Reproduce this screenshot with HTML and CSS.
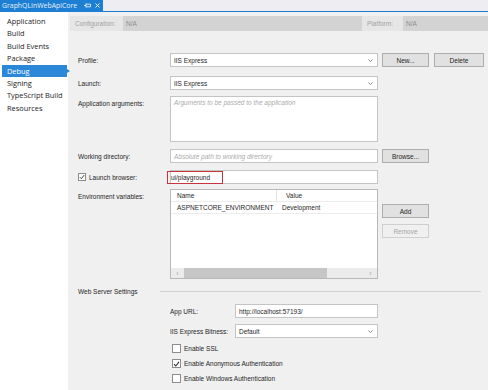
FILE: index.html
```html
<!DOCTYPE html>
<html lang="en">
<head>
    <meta charset="UTF-8">
    <meta name="viewport" content="width=device-width, initial-scale=1.0">
    <title>GraphQLInWebApiCore - Debug</title>
    <link rel="stylesheet" href="styles.css">
</head>
<body>
    <!-- Document tab -->
    <div class="tabstrip">
        <div class="doc-tab">
            <span class="doc-title">GraphQLInWebApiCore</span>
            <svg class="pin" width="7" height="5" viewBox="0 0 7 5"><path d="M0 2.5h2M2 0.5v4M2 1.2h4.5v2.6H2" fill="none" stroke="#e6f0fa" stroke-width="0.9"/></svg>
            <svg class="close" width="5" height="5" viewBox="0 0 5 5"><path d="M0.5 0.5l4 4M4.5 0.5l-4 4" stroke="#e6f0fa" stroke-width="1"/></svg>
        </div>
    </div>

    <div class="workspace">
        <!-- Property pages -->
        <ul class="nav">
            <li>Application</li>
            <li>Build</li>
            <li>Build Events</li>
            <li>Package</li>
            <li class="selected">Debug</li>
            <li>Signing</li>
            <li>TypeScript Build</li>
            <li>Resources</li>
        </ul>

        <div class="page">
            <div class="config-bar">
                <span class="config-label config-wide">Configuration:</span>
                <span class="config-box config-main">N/A</span>
                <span class="config-label">Platform:</span>
                <span class="config-box config-fill">N/A</span>
            </div>

            <div class="form">
                <div class="row row-profile">
                    <span class="row-label">Profile:</span>
                    <div class="field select">IIS Express<svg class="chevron" width="5" height="3" viewBox="0 0 5 3"><path d="M0.5 0.5l2 2 2-2" fill="none" stroke="#7a7a7a" stroke-width="0.9"/></svg></div>
                    <div class="actions">
                        <span class="btn">New...</span>
                        <span class="btn btn-wide">Delete</span>
                    </div>
                </div>

                <div class="row row-launch">
                    <span class="row-label">Launch:</span>
                    <div class="field select">IIS Express<svg class="chevron" width="5" height="3" viewBox="0 0 5 3"><path d="M0.5 0.5l2 2 2-2" fill="none" stroke="#7a7a7a" stroke-width="0.9"/></svg></div>
                </div>

                <div class="row row-args">
                    <span class="row-label label-top">Application arguments:</span>
                    <div class="field textarea"><span class="placeholder">Arguments to be passed to the application</span></div>
                </div>

                <div class="row row-workdir">
                    <span class="row-label">Working directory:</span>
                    <div class="field"><span class="placeholder">Absolute path to working directory</span></div>
                    <div class="actions">
                        <span class="btn">Browse...</span>
                    </div>
                </div>

                <div class="row row-browser">
                    <span class="row-label check-label">
                        <span class="check small checked"><svg width="7" height="6" viewBox="0 0 7 6"><path d="M1 3.2l1.8 1.8L6 0.8" fill="none" stroke="#333" stroke-width="1.1"/></svg></span>
                        Launch browser:
                    </span>
                    <div class="field"><span class="highlight">ui/playground</span></div>
                </div>

                <div class="row row-env">
                    <span class="row-label label-top">Environment variables:</span>
                    <div class="grid-table">
                        <div class="grid-head">
                            <span class="cell cell-name">Name</span>
                            <span class="cell cell-value head-value">Value</span>
                        </div>
                        <div class="grid-row">
                            <span class="cell cell-name">ASPNETCORE_ENVIRONMENT</span>
                            <span class="cell cell-value">Development</span>
                        </div>
                        <div class="grid-space"></div>
                        <div class="hscroll">
                            <span class="arrow">&lsaquo;</span>
                            <span class="thumb"></span>
                            <span class="track"></span>
                            <span class="arrow">&rsaquo;</span>
                        </div>
                    </div>
                    <div class="actions actions-stack">
                        <span class="btn">Add</span>
                        <span class="btn disabled">Remove</span>
                    </div>
                </div>

                <div class="row row-section">
                    <span class="section-label">Web Server Settings</span>
                    <span class="section-line"></span>
                </div>

                <div class="row sub-row row-url">
                    <span class="sub-label">App URL:</span>
                    <div class="field narrow">http://localhost:57193/</div>
                </div>

                <div class="row sub-row row-bitness">
                    <span class="sub-label">IIS Express Bitness:</span>
                    <div class="field narrow select">Default<svg class="chevron" width="5" height="3" viewBox="0 0 5 3"><path d="M0.5 0.5l2 2 2-2" fill="none" stroke="#7a7a7a" stroke-width="0.9"/></svg></div>
                </div>

                <div class="row check-row row-ssl">
                    <span class="check"></span>Enable SSL
                </div>
                <div class="row check-row">
                    <span class="check checked"><svg width="7" height="6" viewBox="0 0 7 6"><path d="M1 3.2l1.8 1.8L6 0.8" fill="none" stroke="#333" stroke-width="1.1"/></svg></span>Enable Anonymous Authentication
                </div>
                <div class="row check-row">
                    <span class="check"></span>Enable Windows Authentication
                </div>
            </div>
        </div>
    </div>
</body>
</html>
```

FILE: styles.css
```css
body {
    margin: 0;
    width: 488px;
    height: 390px;
    overflow: hidden;
    background: #f0f0f0;
    color: #1f1f1f;
    font-family: "Liberation Sans", Arial, sans-serif;
    font-size: 6.5px;
}

/* tab strip */
.tabstrip {
    height: 11px;
    background: #eeeef2;
    border-bottom: 1px solid #1c7fd3;
    display: flex;
}
.doc-tab {
    width: 101px;
    padding-left: 2px;
    background: #1c7fd3;
    color: #e6f0fa;
    display: flex;
    align-items: center;
    font-family: "Open Sans", sans-serif;
    font-size: 6.9px;
}
.pin {
    margin-left: 7px;
}
.close {
    margin-left: 4px;
}

.workspace {
    display: flex;
    height: 378px;
}

/* left navigation */
.nav {
    width: 68px;
    flex-shrink: 0;
    margin: 0;
    padding: 3px 0 0;
    list-style: none;
    background: #fff;
    font-family: "Open Sans", sans-serif;
    font-size: 7.4px;
    color: #1e1e1e;
}
.nav li {
    margin: 0 1px 0 2px;
    padding-left: 5px;
    line-height: 12.4px;
    height: 12.4px;
    position: relative;
}
.nav li.selected {
    background: #2b88d8;
    color: #fff;
}
.nav li.selected::after {
    content: "";
    position: absolute;
    right: -3px;
    top: 4px;
    border-left: 3px solid #2b88d8;
    border-top: 2.5px solid transparent;
    border-bottom: 2.5px solid transparent;
}

.page {
    flex: 1;
}

/* configuration bar */
.config-bar {
    display: flex;
    height: 15px;
    margin: 4px 0 0 2px;
    line-height: 15px;
}
.config-label {
    background: #e6e6e6;
    color: #a2a2a2;
    width: 36px;
    padding-left: 5px;
}
.config-wide {
    width: 48px;
}
.config-box {
    background: #d3d3d3;
    color: #8c8c8c;
    padding-left: 3px;
}
.config-main {
    width: 236px;
}
.config-fill {
    flex: 1;
}

/* form */
.form {
    padding-left: 10px;
    margin-top: 22px;
}
.row {
    display: flex;
    align-items: center;
}
.row-launch { margin-top: 9px; }
.row-args { margin-top: 6px; align-items: flex-start; }
.row-workdir { margin-top: 7px; }
.row-browser { margin-top: 7px; }
.row-env { margin-top: 5px; align-items: flex-start; }
.row-section { margin-top: 7px; height: 10px; }
.row-url { margin-top: 8px; }
.row-bitness { margin-top: 6px; }
.row-ssl { margin-top: 7px; }

.row-label {
    width: 92px;
    flex-shrink: 0;
}
.label-top {
    padding-top: 4px;
}
.check-label {
    display: flex;
    align-items: center;
}

.field {
    width: 208px;
    height: 14px;
    box-sizing: border-box;
    border: 1px solid #c4c4c4;
    background: #fff;
    display: flex;
    align-items: center;
    padding-left: 3px;
}
.select {
    justify-content: space-between;
    padding-right: 4px;
}
.textarea {
    height: 46px;
    align-items: flex-start;
    padding-top: 2px;
}
.placeholder {
    color: #ababab;
    font-style: italic;
}
.highlight {
    margin-left: -7px;
    padding: 2px 12px 2px 3px;
    border: 1.5px solid #c9353f;
}

/* buttons */
.actions {
    margin-left: 4px;
    display: flex;
    gap: 5px;
}
.actions-stack {
    flex-direction: column;
    gap: 6px;
    margin-top: 15px;
}
.btn {
    width: 47px;
    height: 14px;
    box-sizing: border-box;
    border: 1px solid #adadad;
    background: #e1e1e1;
    display: flex;
    align-items: center;
    justify-content: center;
}
.btn-wide {
    width: 50px;
}
.btn.disabled {
    background: #f0f0f0;
    border-color: #cfcfcf;
    color: #a6a6a6;
}

/* environment variable grid */
.grid-table {
    width: 208px;
    height: 90px;
    box-sizing: border-box;
    border: 1px solid #b8b8b8;
    background: #fff;
    display: flex;
    flex-direction: column;
}
.grid-head, .grid-row {
    display: flex;
    height: 11px;
    align-items: center;
    border-bottom: 1px solid #ececec;
}
.cell-name {
    width: 106px;
    padding-left: 6px;
    box-sizing: border-box;
    height: 100%;
    display: flex;
    align-items: center;
}
.grid-head .cell-name {
    border-right: 1px solid #e2e2e2;
}
.cell-value {
    padding-left: 5px;
}
.head-value {
    padding-left: 9px;
}
.grid-space {
    flex: 1;
}
.hscroll {
    height: 10px;
    display: flex;
    background: #ebebeb;
    align-items: center;
    color: #a0a0a0;
}
.arrow {
    width: 13px;
    text-align: center;
    font-size: 7px;
}
.thumb {
    width: 143px;
    height: 100%;
    background: #c6c6c6;
}
.track {
    flex: 1;
}

/* web server settings */
.section-label {
    width: 82px;
    flex-shrink: 0;
}
.section-line {
    flex: 1;
    height: 1px;
    background: #d2d2d2;
    margin-right: 7px;
}
.sub-row {
    padding-left: 92px;
}
.sub-label {
    width: 65px;
    flex-shrink: 0;
}
.narrow {
    width: 143px;
}

/* checkboxes */
.check-row {
    padding-left: 94px;
    height: 9px;
    margin-top: 6px;
}
.check {
    width: 9px;
    height: 9px;
    box-sizing: border-box;
    border: 1px solid #8c8c8c;
    background: #fff;
    margin-right: 3px;
    display: flex;
    align-items: center;
    justify-content: center;
}
.check.small {
    width: 8px;
    height: 8px;
}
```
